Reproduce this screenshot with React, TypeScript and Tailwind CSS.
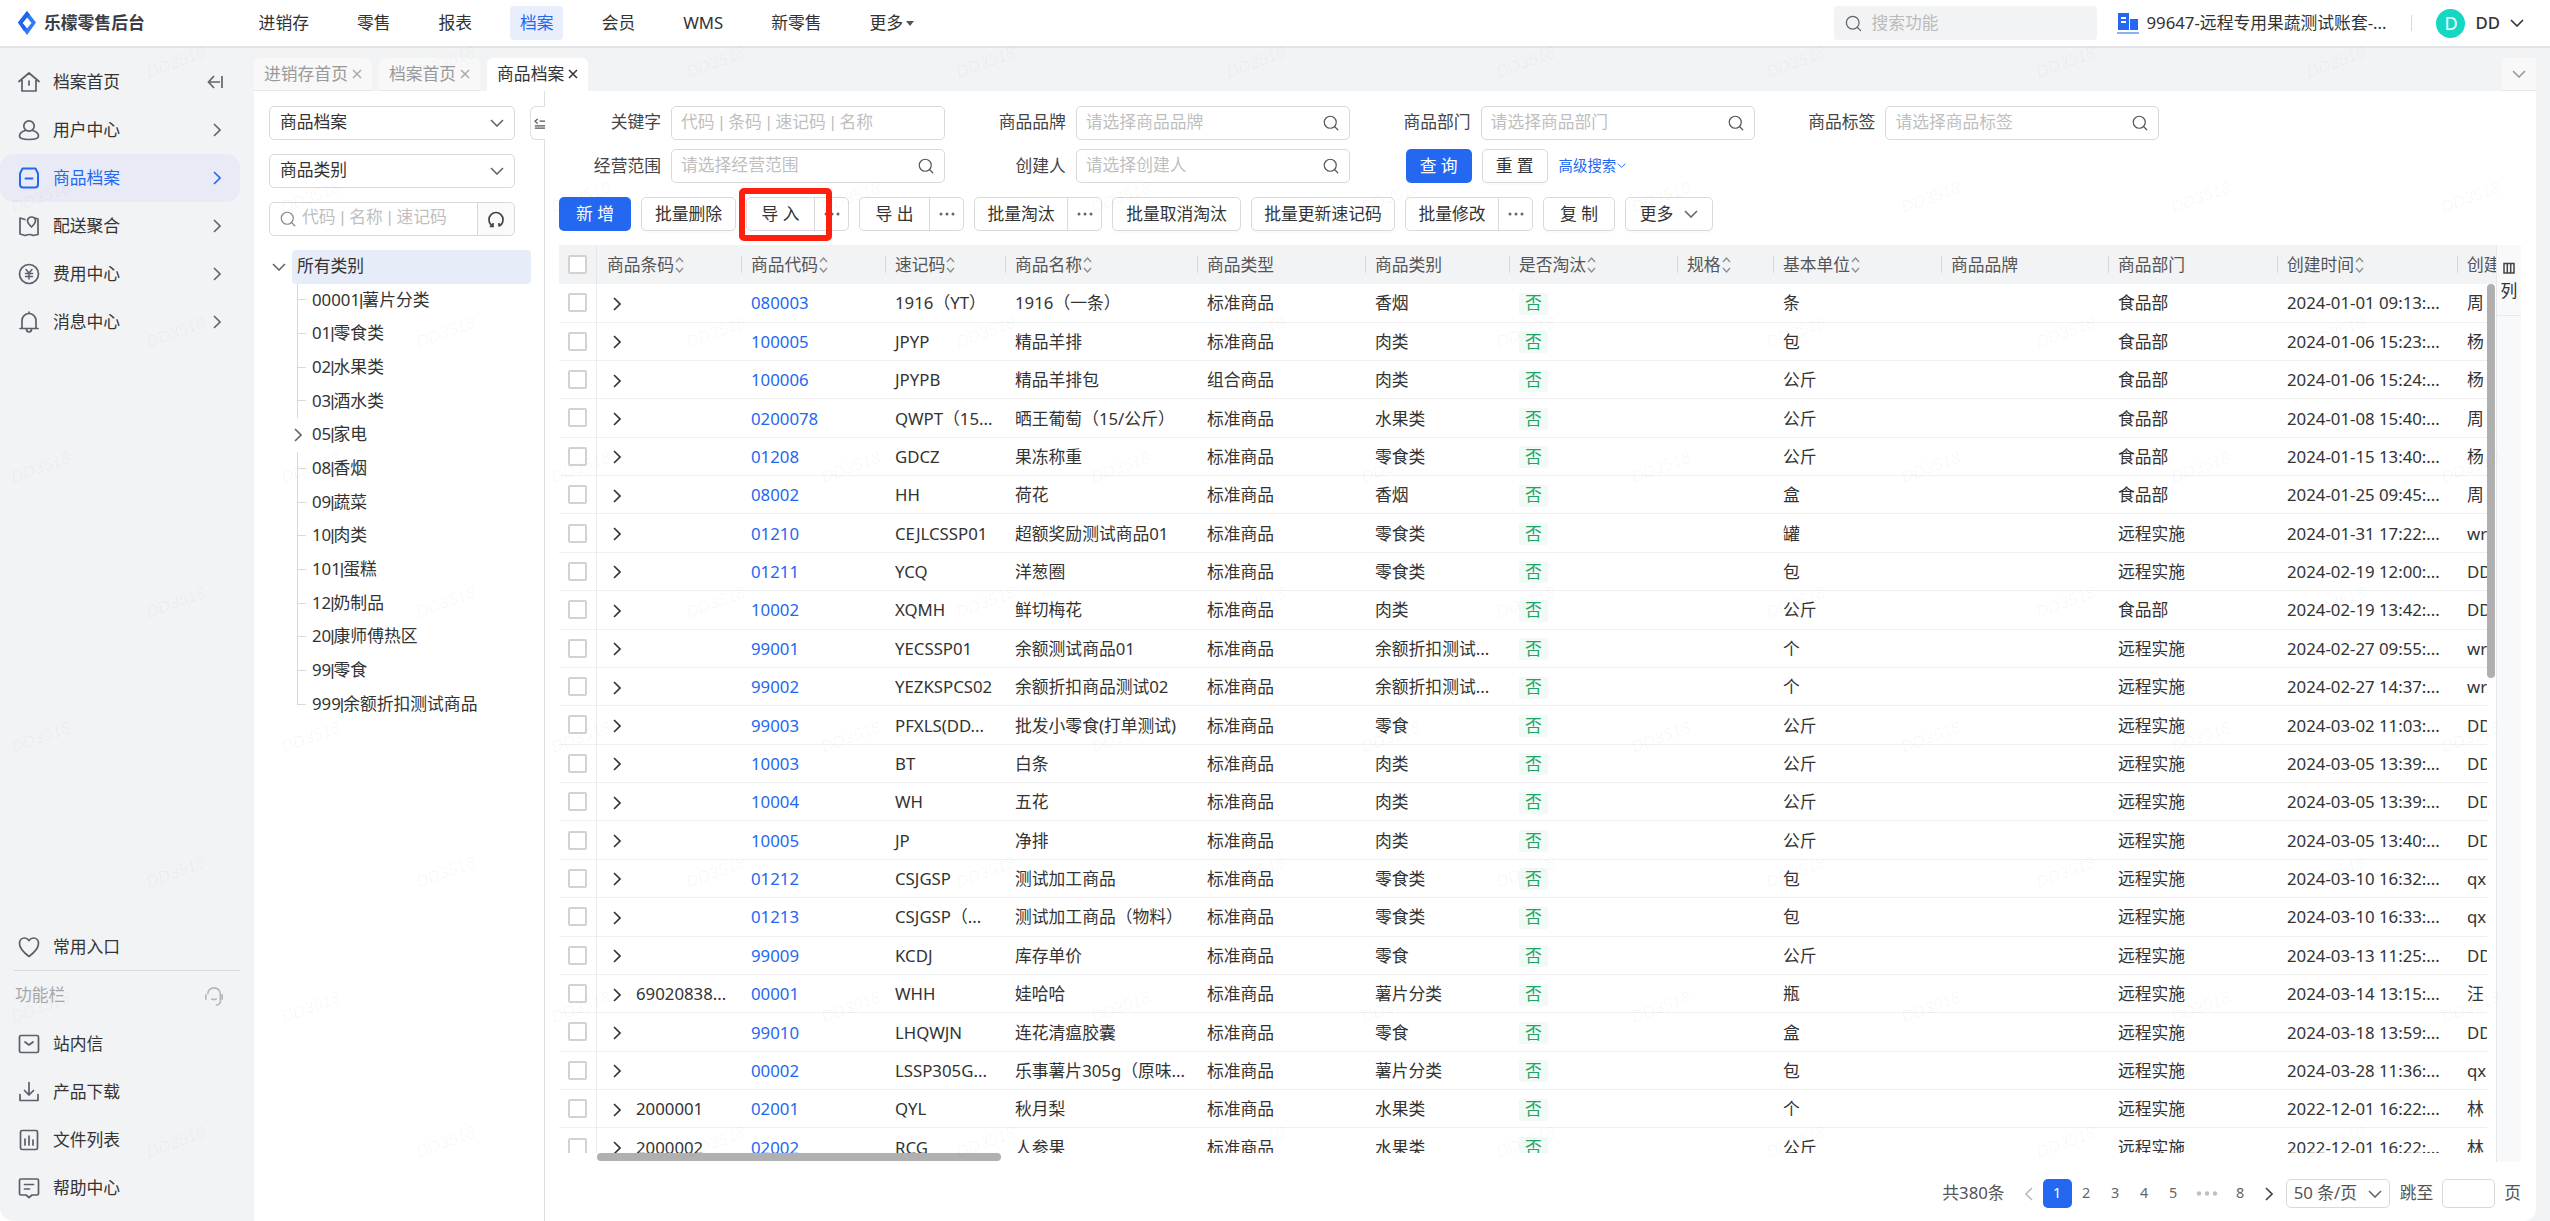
import { Search } from "lucide-react";
import type { ReactNode } from "react";

const BLUE = "#2468f2";

function Chev({ dir = "right", color = "#555", className = "" }: { dir?: "right" | "left" | "down"; color?: string; className?: string }) {
  if (dir === "down") {
    return (
      <svg viewBox="0 0 14 8" width="14" height="8" fill="none" stroke={color} strokeWidth="1.6" className={className}>
        <path d="M1 1l6 6 6-6" />
      </svg>
    );
  }
  return (
    <svg viewBox="0 0 8 14" width="8" height="14" fill="none" stroke={color} strokeWidth="1.6" className={className}>
      <path d={dir === "right" ? "M1 1l6 6-6 6" : "M7 1L1 7l6 6"} />
    </svg>
  );
}

function Ico({ children, color = "#5b5e6b" }: { children: ReactNode; color?: string }) {
  return (
    <svg viewBox="0 0 22 22" width="22" height="22" fill="none" stroke={color} strokeWidth="1.7" strokeLinejoin="round" strokeLinecap="round" className="shrink-0">
      {children}
    </svg>
  );
}

const icons: Record<string, (c?: string) => ReactNode> = {
  home: (c) => <Ico color={c}><path d="M1 10.500L11 2l10 8.500M4 9v11h14V9M11 10v4" /></Ico>,
  user: (c) => <Ico color={c}><circle cx="11" cy="7" r="5.200" /><path d="M7.500 11.500C4 12.500 1.500 14.500 1.500 17c0 2.500 3 3.500 9.500 3.500S20.500 19.500 20.500 17c0-2.500-2.500-4.500-6-5.500" /></Ico>,
  box: (c) => <Ico color={c}><path d="M4.500 1.500h13l2.500 5v11a3 3 0 0 1-3 3H5a3 3 0 0 1-3-3v-11zM7.500 11.500h7" strokeWidth="2" /></Ico>,
  map: (c) => <Ico color={c}><path d="M7 4.500L2 3v16l5 1.500c3-1 5-2 8 0l5-1V4l-3-1" /><path d="M13.500 12c-2.500-2.500-4-4-4-6a4 4 0 0 1 8 0c0 2-1.500 3.500-4 6z" /></Ico>,
  fee: (c) => <Ico color={c}><circle cx="11" cy="11" r="9.500" /><path d="M8 6.500l3 3.500 3-3.500M7.500 10.500h7M7.500 13.500h7M11 10v6" strokeWidth="1.500" /></Ico>,
  bell: (c) => <Ico color={c}><path d="M4 17V9.500a7 7 0 0 1 14 0V17M2 17.500h18M8.500 18c0 4 5 4 5 0M11 1v1.500" /></Ico>,
  heart: (c) => <Ico color={c}><path d="M11 20.500C5 16 1.500 12 1.500 7.500 1.500 4 4 2 6.500 2c2 0 3.500 1 4.500 2.500C12 3 13.500 2 15.500 2c2.500 0 5 2 5 5.500 0 4.500-3.500 8.500-9.500 13z" /></Ico>,
  mail: (c) => <Ico color={c}><rect x="1.500" y="2.500" width="19" height="17" rx="1.500" /><path d="M7 9l4 3 4-3" /></Ico>,
  down: (c) => <Ico color={c}><path d="M11 1.500v12M6.500 9.500l4.500 4.500 4.500-4.500M2 13.500v6h18v-6" /></Ico>,
  file: (c) => <Ico color={c}><rect x="2.500" y="1.500" width="17" height="19" rx="1.500" /><path d="M7 10v6M11 7v9M15 11v5" /></Ico>,
  help: (c) => <Ico color={c}><path d="M3 2h16a1.500 1.500 0 0 1 1.500 1.500v13A1.500 1.500 0 0 1 19 18h-5l-3 2.500L8 18H3a1.500 1.500 0 0 1-1.500-1.500v-13A1.500 1.500 0 0 1 3 2zM6.500 7.500h9M6.500 12h5" /></Ico>,
};

function SideItem({ icon, label, active, arrow = true }: { icon: string; label: string; active?: boolean; arrow?: boolean }) {
  const color = active ? BLUE : undefined;
  return (
    <div className={`mr-[14px] flex h-[48px] items-center rounded-[14px] pl-[18px] pr-[19px] ${active ? "bg-[#e8ebf6] text-[#2468f2]" : "text-[#333]"}`}>
      {icons[icon](color)}
      <span className="ml-[13px] flex-1">{label}</span>
      {arrow && <Chev color={active ? BLUE : "#666"} />}
    </div>
  );
}

function Sidebar() {
  return (
    <aside className="flex w-[254px] shrink-0 flex-col rounded-bl-[14px] bg-[#f2f3f5] pb-[9px] pt-[10px]">
      <div className="mr-[14px] flex h-[48px] items-center pl-[18px] pr-[17px] text-[#333]">
        {icons.home()}
        <span className="ml-[13px] flex-1">档案首页</span>
        <svg viewBox="0 0 16 14" width="16" height="14" fill="none" stroke="#666" strokeWidth="1.700">
          <path d="M7 1L1.500 7 7 13M1.500 7H13M15 1v12" />
        </svg>
      </div>
      <SideItem icon="user" label="用户中心" />
      <SideItem icon="box" label="商品档案" active />
      <SideItem icon="map" label="配送聚合" />
      <SideItem icon="fee" label="费用中心" />
      <SideItem icon="bell" label="消息中心" />
      <div className="mt-auto">
        <div className="mr-[14px] ml-[14px] flex h-[47px] items-center border-b border-[#d9dbe0] pl-[4px] text-[#333]">
          {icons.heart()}
          <span className="ml-[13px]">常用入口</span>
        </div>
        <div className="mr-[30px] flex h-[49px] items-center justify-between pl-[15px] text-[#a5a7ac]">
          <span>功能栏</span>
          <svg viewBox="0 0 22 24" width="20" height="22" fill="none" stroke="#b4b6bb" strokeWidth="1.800">
            <path d="M4 10a7 7 0 0 1 14 0v8c0 2-2 4-5 4M2 10v6M20 10v6M8 15c1.500 1.300 4.500 1.300 6 0" />
          </svg>
        </div>
        <SideItem icon="mail" label="站内信" arrow={false} />
        <SideItem icon="down" label="产品下载" arrow={false} />
        <SideItem icon="file" label="文件列表" arrow={false} />
        <SideItem icon="help" label="帮助中心" arrow={false} />
      </div>
    </aside>
  );
}

function TopBar() {
  const nav = ["进销存", "零售", "报表", "档案", "会员", "WMS", "新零售"];
  return (
    <header className="flex h-[48px] shrink-0 items-center border-b-2 border-[#e3e4e7] bg-white">
      <div className="flex w-[249px] shrink-0 items-center pl-[18px]">
        <svg viewBox="0 0 18 24" width="18" height="24">
          <path d="M9 0L0 11.500 9 24l9-12.500zM9 6.500l4.500 5.500L9 17.500 4.500 12z" fill="#2f7cf6" fillRule="evenodd" />
          <path d="M9 0l3 3.800-3 2.700-4.500 5.500L9 17.500 6 20.300 0 11.500z" fill="#1e66f0" />
        </svg>
        <span className="ml-[8px] text-[16.800px] font-bold text-[#3a3d45]">乐檬零售后台</span>
      </div>
      <nav className="flex items-center gap-[28.800px]">
        {nav.map((n) => (
          <span key={n} className={`flex h-[34px] items-center rounded-[4px] px-[9.600px] ${n === "档案" ? "bg-[#e8eefc] text-[#2468f2]" : "text-[#333]"}`}>
            {n}
          </span>
        ))}
        <span className="flex h-[34px] items-center gap-[3px] px-[9.600px] text-[#333]">
          更多
          <svg viewBox="0 0 8 5" width="8" height="5"><path d="M0 0h8L4 5z" fill="#555" /></svg>
        </span>
      </nav>
      <div className="ml-auto flex h-[34px] w-[263px] items-center rounded-[4px] bg-[#f2f3f5] pl-[10px] text-[#bbb]">
        <Search size={19} strokeWidth={1.6} color="#666" />
        <span className="ml-[8px]">搜索功能</span>
      </div>
      <svg viewBox="0 0 22 22" width="22" height="22" className="ml-[20px]">
        <path d="M1 1h11v17H1zM13 7h8v11h-8z" fill="#2468f2" />
        <path d="M0 20h22v2H0z" fill="#8db0f7" />
        <path d="M4 5h5v2H4zM4 9h5v2H4z" fill="#fff" />
      </svg>
      <span className="ml-[7px] w-[240px] whitespace-nowrap text-[#333]">99647-远程专用果蔬测试账套-...</span>
      <span className="ml-[25px] h-[16px] w-px bg-[#d9d9d9]" />
      <span className="ml-[24px] flex h-[29px] w-[29px] items-center justify-center rounded-full bg-[#14d8c3] text-[18px] text-white">D</span>
      <span className="ml-[10px] font-medium text-[#333]">DD</span>
      <Chev dir="down" color="#333" className="ml-[10px] mr-[26px]" />
    </header>
  );
}

function Tab({ label, active }: { label: string; active?: boolean }) {
  return (
    <div className={`flex h-[33px] items-center gap-[4px] rounded-t-[6px] border-b px-[10px] ${active ? "border-white bg-white text-[#333]" : "border-[#e6e7ea] bg-[#f8f8f9] text-[#9a9a9a]"}`}>
      <span>{label}</span>
      <svg viewBox="0 0 10 10" width="10" height="10" fill="none" stroke={active ? "#333" : "#aaa"} strokeWidth="1.500">
        <path d="M1 1l8 8M9 1L1 9" />
      </svg>
    </div>
  );
}

const treeNodes = ["00001|薯片分类", "01|零食类", "02|水果类", "03|酒水类", "05|家电", "08|香烟", "09|蔬菜", "10|肉类", "101|蛋糕", "12|奶制品", "20|康师傅热区", "99|零食", "999|余额折扣测试商品"];

function TreeRow({ label, last, branch }: { label: string; last?: boolean; branch?: boolean }) {
  const [code, name] = label.split("|");
  return (
    <div className="flex h-[33.700px] items-stretch text-[#333]">
      {branch ? (
        <div className="flex w-[43px] items-center justify-end pr-[10px]">
          <Chev color="#666" />
        </div>
      ) : (
        <div className="ml-[28px] mr-[6px] flex w-[9px] flex-col">
          <div className="h-1/2 border-b border-l border-[#d9d9d9]" />
          {!last && <div className="h-1/2 border-l border-[#d9d9d9]" />}
        </div>
      )}
      <span className="self-center">
        {code}
        <span className="mx-[-1px] font-['Liberation_Sans',sans-serif]">|</span>
        {name}
      </span>
    </div>
  );
}

function SelectBox({ label }: { label: string }) {
  return (
    <div className="flex h-[33.600px] w-[246px] items-center justify-between rounded-[5px] border border-[#d9d9d9] pl-[10px] pr-[10px] text-[#333]">
      {label}
      <Chev dir="down" color="#666" />
    </div>
  );
}

function TreePanel() {
  return (
    <section className="relative w-[291px] shrink-0 border-r border-[#dcdee2] pl-[15px] pt-[15px]">
      <div className="flex flex-col gap-[14.400px]">
        <SelectBox label="商品档案" />
        <SelectBox label="商品类别" />
        <div className="flex h-[33.600px] w-[246px] items-center rounded-[5px] border border-[#d9d9d9]">
          <Search size={18} strokeWidth={1.6} color="#888" className="ml-[9px]" />
          <span className="ml-[5px] flex-1 font-['Liberation_Sans','Noto_Sans_CJK_SC',sans-serif] text-[#bfbfbf]">代码 | 名称 | 速记码</span>
          <div className="flex h-full w-[37px] items-center justify-center rounded-r-[5px] border-l border-[#d9d9d9] bg-[#fafafa]">
            <svg viewBox="0 0 16 18" width="16" height="18" fill="none" stroke="#444" strokeWidth="1.700">
              <path d="M5 16C2.500 15 1 12.500 1 9.500a7 7 0 0 1 14 0c0 3-1.500 5.500-4 6.500M5 13v3.500H1.800M11 13v3.500" />
            </svg>
          </div>
        </div>
      </div>
      <div className="mt-[14px] flex h-[34px] items-stretch">
        <div className="flex w-[19px] items-center justify-center"><Chev dir="down" color="#666" /></div>
        <div className="ml-[4px] flex w-[239px] items-center rounded-[4px] bg-[#e7ecf9] pl-[5px] text-[#333]">所有类别</div>
      </div>
      {treeNodes.map((n, i) => (
        <TreeRow key={n} label={n} branch={n === "05|家电"} last={i === treeNodes.length - 1} />
      ))}
      {/* handle that sits on the divider */}
      <div className="absolute right-[-1px] top-[15px] flex h-[34px] w-[15px] items-center rounded-l-[6px] border border-r-0 border-[#dcdee2] bg-white pl-[3px]">
        <svg viewBox="0 0 12 12" width="11" height="11" fill="none" stroke="#555" strokeWidth="1.400">
          <path d="M4 1L1 3.500 4 6M6 3.500h6M1 8.500h11M1 11h11" />
        </svg>
      </div>
    </section>
  );
}

function Field({ label, placeholder, search = true }: { label: string; placeholder: string; search?: boolean }) {
  return (
    <div className="flex items-center">
      <label className="mr-[10px] w-[102px] text-right text-[#444]">{label}</label>
      <div className="flex h-[33.600px] w-[274px] items-center rounded-[5px] border border-[#d9d9d9] pl-[9px] pr-[9px]">
        <input placeholder={placeholder} className="min-w-0 flex-1 bg-transparent font-['Liberation_Sans','Noto_Sans_CJK_SC',sans-serif] outline-none placeholder:text-[#bfbfbf]" />
        {search && <Search size={18} strokeWidth={1.6} color="#555" />}
      </div>
    </div>
  );
}

function Btn({ children, className = "" }: { children: ReactNode; className?: string }) {
  return (
    <button className={`flex h-[33.600px] items-center justify-center rounded-[5px] border border-[#d9d9d9] bg-white text-[#333] shadow-[0_2px_0_rgba(0,0,0,0.02)] ${className}`}>
      {children}
    </button>
  );
}

function Dots() {
  return (
    <svg viewBox="0 0 16 4" width="16" height="4" fill="#666">
      <circle cx="2" cy="2" r="1.500" /><circle cx="8" cy="2" r="1.500" /><circle cx="14" cy="2" r="1.500" />
    </svg>
  );
}

function SplitBtn({ label, w, overlay }: { label: string; w: string; overlay?: ReactNode }) {
  return (
    <div className="relative flex h-[33.600px] items-center rounded-[5px] border border-[#d9d9d9] bg-white text-[#333]">
      <span className={`flex h-full items-center justify-center border-r border-[#d9d9d9] ${w}`}>{label}</span>
      <span className="flex h-full w-[33px] items-center justify-center"><Dots /></span>
      {overlay}
    </div>
  );
}

function Toolbar() {
  return (
    <div className="mt-[14.400px] flex gap-[10px]">
      <button className="flex h-[33.600px] w-[72px] items-center justify-center rounded-[5px] bg-[#2468f2] text-white">新 增</button>
      <Btn className="w-[95px]">批量删除</Btn>
      <SplitBtn
        label="导 入"
        w="w-[68px]"
        overlay={<div className="absolute left-[-8px] top-[-10px] h-[53px] w-[93px] rounded-[5px] border-[6.500px] border-[#ff1f0f]" />}
      />
      <SplitBtn label="导 出" w="w-[70px]" />
      <SplitBtn label="批量淘汰" w="w-[93px]" />
      <Btn className="w-[129px]">批量取消淘汰</Btn>
      <Btn className="w-[144px]">批量更新速记码</Btn>
      <SplitBtn label="批量修改" w="w-[93px]" />
      <Btn className="w-[72px]">复 制</Btn>
      <Btn className="w-[88px] gap-[11px]">更多<Chev dir="down" color="#666" /></Btn>
    </div>
  );
}

const gridCols = "grid grid-cols-[38px_144px_144px_120px_192px_168px_144px_168px_96px_168px_167px_169px_180px_100px]";

const headers: [string, boolean][] = [
  ["商品条码", true], ["商品代码", true], ["速记码", true], ["商品名称", true], ["商品类型", false], ["商品类别", false],
  ["是否淘汰", true], ["规格", true], ["基本单位", true], ["商品品牌", false], ["商品部门", false], ["创建时间", true], ["创建人", false],
];

// barcode, code, shorthand, name, type, category, unit, department, created, creator
const rows: string[][] = [
  ["", "080003", "1916（YT）", "1916（一条）", "标准商品", "香烟", "条", "食品部", "2024-01-01 09:13:...", "周"],
  ["", "100005", "JPYP", "精品羊排", "标准商品", "肉类", "包", "食品部", "2024-01-06 15:23:...", "杨"],
  ["", "100006", "JPYPB", "精品羊排包", "组合商品", "肉类", "公斤", "食品部", "2024-01-06 15:24:...", "杨"],
  ["", "0200078", "QWPT（15...", "晒王葡萄（15/公斤）", "标准商品", "水果类", "公斤", "食品部", "2024-01-08 15:40:...", "周"],
  ["", "01208", "GDCZ", "果冻称重", "标准商品", "零食类", "公斤", "食品部", "2024-01-15 13:40:...", "杨"],
  ["", "08002", "HH", "荷花", "标准商品", "香烟", "盒", "食品部", "2024-01-25 09:45:...", "周"],
  ["", "01210", "CEJLCSSP01", "超额奖励测试商品01", "标准商品", "零食类", "罐", "远程实施", "2024-01-31 17:22:...", "wr"],
  ["", "01211", "YCQ", "洋葱圈", "标准商品", "零食类", "包", "远程实施", "2024-02-19 12:00:...", "DD"],
  ["", "10002", "XQMH", "鲜切梅花", "标准商品", "肉类", "公斤", "食品部", "2024-02-19 13:42:...", "DD"],
  ["", "99001", "YECSSP01", "余额测试商品01", "标准商品", "余额折扣测试...", "个", "远程实施", "2024-02-27 09:55:...", "wr"],
  ["", "99002", "YEZKSPCS02", "余额折扣商品测试02", "标准商品", "余额折扣测试...", "个", "远程实施", "2024-02-27 14:37:...", "wr"],
  ["", "99003", "PFXLS(DD...", "批发小零食(打单测试)", "标准商品", "零食", "公斤", "远程实施", "2024-03-02 11:03:...", "DD"],
  ["", "10003", "BT", "白条", "标准商品", "肉类", "公斤", "远程实施", "2024-03-05 13:39:...", "DD"],
  ["", "10004", "WH", "五花", "标准商品", "肉类", "公斤", "远程实施", "2024-03-05 13:39:...", "DD"],
  ["", "10005", "JP", "净排", "标准商品", "肉类", "公斤", "远程实施", "2024-03-05 13:40:...", "DD"],
  ["", "01212", "CSJGSP", "测试加工商品", "标准商品", "零食类", "包", "远程实施", "2024-03-10 16:32:...", "qx"],
  ["", "01213", "CSJGSP（...", "测试加工商品（物料）", "标准商品", "零食类", "包", "远程实施", "2024-03-10 16:33:...", "qx"],
  ["", "99009", "KCDJ", "库存单价", "标准商品", "零食", "公斤", "远程实施", "2024-03-13 11:25:...", "DD"],
  ["69020838...", "00001", "WHH", "娃哈哈", "标准商品", "薯片分类", "瓶", "远程实施", "2024-03-14 13:15:...", "汪"],
  ["", "99010", "LHQWJN", "连花清瘟胶囊", "标准商品", "零食", "盒", "远程实施", "2024-03-18 13:59:...", "DD"],
  ["", "00002", "LSSP305G...", "乐事薯片305g（原味...", "标准商品", "薯片分类", "包", "远程实施", "2024-03-28 11:36:...", "qx"],
  ["2000001", "02001", "QYL", "秋月梨", "标准商品", "水果类", "个", "远程实施", "2022-12-01 16:22:...", "林"],
  ["2000002", "02002", "RCG", "人参果", "标准商品", "水果类", "公斤", "远程实施", "2022-12-01 16:22:...", "林"],
];

function Check() {
  return <span className="h-[19px] w-[19px] rounded-[2px] border-2 border-[#d2d2d2] bg-white" />;
}

function Sorter() {
  return (
    <svg viewBox="0 0 9 18" width="9" height="18" fill="none" stroke="#8c8c8c" strokeWidth="1.300" className="ml-[1px] shrink-0">
      <path d="M1 6l3.500-4L8 6M1 12l3.500 4L8 12" />
    </svg>
  );
}

function Cell({ children, className = "" }: { children: ReactNode; className?: string }) {
  return <div className={`flex items-center overflow-hidden whitespace-nowrap pl-[10px] pt-[2px] ${className}`}>{children}</div>;
}

function TableHead() {
  return (
    <div className="h-[39px] w-[1937px] overflow-hidden bg-[#f2f3f5] text-[#555]">
      <div className={`${gridCols} h-full`}>
        <div className="flex items-center justify-center border-r border-[#e6e7ea]"><Check /></div>
        {headers.map(([h, sortable], i) => (
          <div key={h} className="flex items-center overflow-hidden whitespace-nowrap">
            {i > 0 && <span className="h-[17px] w-px shrink-0 bg-[#d8d8d8]" />}
            <span className={`pt-[2px] ${i === 0 ? "pl-[10px]" : "pl-[9px]"}`}>{h}</span>
            {sortable && <Sorter />}
          </div>
        ))}
      </div>
    </div>
  );
}

function TableBody() {
  return (
    <div className="h-[869px] w-[1928px] overflow-hidden">
      {rows.map((r) => (
        <div key={r[1]} className={`${gridCols} h-[38.380px] border-b border-[#f0f0f0] text-[#333]`}>
          <div className="flex items-center justify-center border-r border-[#ececec]"><Check /></div>
          <Cell className="!pl-[16px]">
            <Chev color="#333" className="shrink-0" />
            <span className="ml-[15px]">{r[0]}</span>
          </Cell>
          <Cell><span className="text-[#2468f2]">{r[1]}</span></Cell>
          <Cell>{r[2]}</Cell>
          <Cell>{r[3]}</Cell>
          <Cell>{r[4]}</Cell>
          <Cell>{r[5]}</Cell>
          <Cell><span className="flex h-[22px] items-center rounded-[2px] bg-[#f2faf6] px-[6px] text-[#1ea566]">否</span></Cell>
          <Cell />
          <Cell>{r[6]}</Cell>
          <Cell />
          <Cell>{r[7]}</Cell>
          <Cell>{r[8]}</Cell>
          <Cell>{r[9]}</Cell>
        </div>
      ))}
    </div>
  );
}

function PageNum({ n, on }: { n: string; on?: boolean }) {
  return (
    <span className={`flex h-[29px] w-[29px] items-center justify-center rounded-[5px] text-[14.400px] ${on ? "bg-[#2468f2] text-white" : "text-[#666]"}`}>
      {n}
    </span>
  );
}

function Pagination() {
  return (
    <div className="mt-[17px] flex h-[29px] items-center justify-end pr-[15px] text-[#555]">
      <span>共380条</span>
      <span className="ml-[20px] flex w-[18px]"><Chev dir="left" color="#bbb" /></span>
      <PageNum n="1" on />
      <PageNum n="2" />
      <PageNum n="3" />
      <PageNum n="4" />
      <PageNum n="5" />
      <span className="flex w-[38px] justify-center"><svg viewBox="0 0 22 5" width="22" height="5" fill="#bfbfbf"><circle cx="3" cy="2.500" r="2.200" /><circle cx="11" cy="2.500" r="2.200" /><circle cx="19" cy="2.500" r="2.200" /></svg></span>
      <PageNum n="8" />
      <span className="flex w-[29px] justify-center"><Chev color="#444" /></span>
      <div className="ml-[2px] flex h-[29px] w-[104px] items-center justify-between rounded-[5px] border border-[#d9d9d9] px-[7px]">
        50 条/页
        <Chev dir="down" color="#666" />
      </div>
      <span className="ml-[10px]">跳至</span>
      <span className="ml-[9px] h-[29px] w-[53px] rounded-[5px] border border-[#d9d9d9]" />
      <span className="ml-[9px]">页</span>
    </div>
  );
}

function MainArea() {
  return (
    <section className="min-w-0 flex-1 pl-[14px] pt-[15px]">
      <div className="grid grid-cols-[repeat(4,404.800px)] gap-y-[9.600px]">
        <Field label="关键字" placeholder="代码 | 条码 | 速记码 | 名称" search={false} />
        <Field label="商品品牌" placeholder="请选择商品品牌" />
        <Field label="商品部门" placeholder="请选择商品部门" />
        <Field label="商品标签" placeholder="请选择商品标签" />
        <Field label="经营范围" placeholder="请选择经营范围" />
        <Field label="创建人" placeholder="请选择创建人" />
        <div className="ml-[37px] flex items-center">
          <button className="flex h-[33.600px] w-[66px] items-center justify-center rounded-[5px] bg-[#2468f2] text-white">查 询</button>
          <Btn className="ml-[10px] w-[66px]">重 置</Btn>
          <span className="ml-[11px] text-[14.400px] text-[#2468f2]">高级搜索</span>
          <Chev dir="down" color={BLUE} className="ml-[1px] h-[5px] w-[9px]" />
        </div>
      </div>
      <Toolbar />
      <div className="mt-[14.400px] flex">
        <div className="w-[1937px]">
          <TableHead />
          <div className="flex">
            <div>
              <TableBody />
              <div className="h-[9px] pl-[38px]"><div className="h-[8px] w-[404px] rounded-[4px] bg-[#b0b0b0]" /></div>
            </div>
            <div className="h-[394px] w-[8px] rounded-[4px] bg-[#b0b0b0]" />
          </div>
        </div>
        <div className="w-[25px] border-l border-[#e8e8e8] bg-[#f8f9fb]">
          <div className="flex h-[71px] flex-col items-center border-b border-[#e8e8e8] pt-[17px] text-[#333]">
            <svg viewBox="0 0 12 12" width="12" height="12" fill="none" stroke="#444" strokeWidth="1.500">
              <path d="M1 1.500h10v9.500H1zM4.300 1.500v9.500M7.700 1.500v9.500" />
            </svg>
            <span className="mt-[9px]">列</span>
          </div>
        </div>
      </div>
      <Pagination />
    </section>
  );
}

const marks: [number, number][] = [];
for (let r = 0; r < 9; r++) {
  for (let c = 0; c < 10; c++) {
    marks.push([(r % 2 === 0 ? 176 : 41) + c * 270, 63 + r * 135]);
  }
}

export default function App() {
  return (
    <div className="relative flex h-[1221px] w-[2550px] flex-col overflow-hidden bg-white font-['Noto_Sans','Noto_Sans_CJK_SC',sans-serif] text-[16.800px] leading-none">
      <TopBar />
      <div className="flex min-h-0 flex-1">
        <Sidebar />
        <div className="flex min-w-0 flex-1 flex-col bg-[#f2f3f5] pr-[14px]">
          <div className="flex h-[43px] shrink-0 items-end gap-[7px]">
            <Tab label="进销存首页" />
            <Tab label="档案首页" />
            <Tab label="商品档案" active />
            <div className="ml-auto flex h-[33px] w-[34px] items-center justify-center border-b border-[#e6e7ea] bg-[#f8f8f9]">
              <Chev dir="down" color="#999" />
            </div>
          </div>
          <div className="flex min-h-0 flex-1 rounded-br-[12px] bg-white">
            <TreePanel />
            <MainArea />
          </div>
        </div>
      </div>
      {/* account watermark across the whole page */}
      {marks.map(([x, y]) => (
        <span
          key={`${x}-${y}`}
          className="pointer-events-none absolute -translate-x-1/2 -translate-y-1/2 -rotate-[20deg] font-['Liberation_Sans',sans-serif] text-[16.800px] italic text-[rgba(0,0,0,0.035)]"
          style={{ left: x, top: y }}
        >
          DD3518
        </span>
      ))}
    </div>
  );
}
